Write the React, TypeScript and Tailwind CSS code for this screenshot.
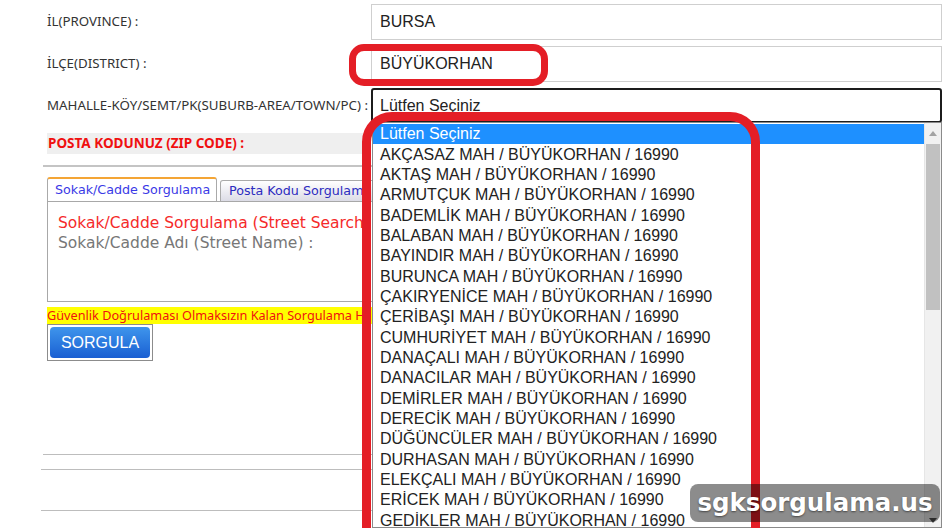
import React from "react";

const mahalleler = [
  "AKÇASAZ MAH / BÜYÜKORHAN / 16990",
  "AKTAŞ MAH / BÜYÜKORHAN / 16990",
  "ARMUTÇUK MAH / BÜYÜKORHAN / 16990",
  "BADEMLİK MAH / BÜYÜKORHAN / 16990",
  "BALABAN MAH / BÜYÜKORHAN / 16990",
  "BAYINDIR MAH / BÜYÜKORHAN / 16990",
  "BURUNCA MAH / BÜYÜKORHAN / 16990",
  "ÇAKIRYENİCE MAH / BÜYÜKORHAN / 16990",
  "ÇERİBAŞI MAH / BÜYÜKORHAN / 16990",
  "CUMHURİYET MAH / BÜYÜKORHAN / 16990",
  "DANAÇALI MAH / BÜYÜKORHAN / 16990",
  "DANACILAR MAH / BÜYÜKORHAN / 16990",
  "DEMİRLER MAH / BÜYÜKORHAN / 16990",
  "DERECİK MAH / BÜYÜKORHAN / 16990",
  "DÜĞÜNCÜLER MAH / BÜYÜKORHAN / 16990",
  "DURHASAN MAH / BÜYÜKORHAN / 16990",
  "ELEKÇALI MAH / BÜYÜKORHAN / 16990",
  "ERİCEK MAH / BÜYÜKORHAN / 16990",
  "GEDİKLER MAH / BÜYÜKORHAN / 16990",
];

const labelCls = "w-[324px] shrink-0 text-[13.3px] text-[#333] font-['Noto_Sans',sans-serif]";
const fieldCls =
  "w-[571px] h-[36px] flex items-center pl-[8px] border border-[#cfcfcf] bg-white text-[16px] text-[#222] font-['Liberation_Sans',Arial,sans-serif]";

export default function App() {
  return (
    <div className="relative w-[945px] h-[528px] overflow-hidden bg-white">
      {/* form */}
      <div className="pl-[47px] pt-[4px]">
        <div className="flex items-center">
          <div className={labelCls}>İL(PROVINCE) :</div>
          <div className={fieldCls}>BURSA</div>
        </div>
        <div className="flex items-center mt-[6px]">
          <div className={labelCls}>İLÇE(DISTRICT) :</div>
          <div className={fieldCls}>BÜYÜKORHAN</div>
        </div>
        <div className="flex items-center mt-[6px]">
          <div className={labelCls}>MAHALLE-KÖY/SEMT/PK(SUBURB-AREA/TOWN/PC) :</div>
          <div className="w-[571px] h-[35px] flex items-center pl-[7px] border-2 border-[#1c1c1c] rounded-[3px] bg-white text-[16px] text-[#222] font-['Liberation_Sans',Arial,sans-serif]">
            Lütfen Seçiniz
          </div>
        </div>

        <div className="mt-[10px] w-[323px] h-[21px] flex items-center pl-[1px] bg-[#efefef] text-[13.5px] font-bold text-[#f01010] font-['Noto_Sans',sans-serif]">
          POSTA KODUNUZ (ZIP CODE) :
        </div>

        <div className="mt-[11px] -ml-[4px] w-[890px] border-t-2 border-[#c4c4c4]" />

        {/* tabs */}
        <div className="mt-[10px] flex items-end h-[24px] font-['DejaVu_Sans',Verdana,sans-serif] text-[12.7px]">
          <div className="w-[170px] h-[24px] flex items-center pl-[7px] bg-white border border-b-0 border-[#aaa] border-t-2 border-t-[#f4a535] rounded-t-[3px] text-[#3a3ae6] whitespace-nowrap overflow-hidden">
            Sokak/Cadde Sorgulama
          </div>
          <div className="ml-[3px] w-[170px] h-[21px] flex items-center pl-[8px] bg-gradient-to-b from-white to-[#dcdce6] border border-b-0 border-[#aaa] rounded-t-[3px] text-[#2d2dc0] whitespace-nowrap overflow-hidden">
            Posta Kodu Sorgulama
          </div>
        </div>
        <div className="w-[860px] h-[101px] border border-[#a8a8a8] pt-[11px] pl-[10px] font-['DejaVu_Sans',Verdana,sans-serif] text-[15.5px] leading-[20px]">
          <div className="text-[#f52a2a]">Sokak/Cadde Sorgulama (Street Search)</div>
          <div className="text-[#777]">Sokak/Cadde Adı (Street Name) :</div>
        </div>

        <div className="mt-[5px] w-[860px] h-[17px] flex items-center bg-[#ffff00] text-[12.7px] text-[#f01010] font-['Noto_Sans',sans-serif] whitespace-nowrap">
          Güvenlik Doğrulaması Olmaksızın Kalan Sorgulama Hakkınız
        </div>

        <div className="w-[106px] h-[37px] border border-[#8c8c8c] p-[2px]">
          <div className="w-full h-full rounded-[4px] bg-gradient-to-b from-[#3f95ec] to-[#1b5fd2] flex items-center justify-center text-white text-[16px] font-['Liberation_Sans',Arial,sans-serif]">
            SORGULA
          </div>
        </div>

        <div className="mt-[93px] -ml-[4px] w-[895px] border-t border-[#bdbdbd]" />
        <div className="mt-[14px] -ml-[6px] w-[897px] border-t border-[#bdbdbd]" />
        <div className="mt-[40px] -ml-[6px] w-[897px] border-t border-[#bdbdbd]" />
      </div>

      {/* open select list */}
      <div className="absolute left-[372px] top-[122px] w-[570px] h-[406px] flex border border-[#8a8a8a] bg-white font-['Liberation_Sans',Arial,sans-serif] text-[16px] text-[#222]">
        <div className="flex-1 overflow-hidden pt-[1px]">
          <div className="h-[20.35px] flex items-center pl-[7px] bg-[#1e90ff] text-white">Lütfen Seçiniz</div>
          {mahalleler.map((m) => (
            <div key={m} className="h-[20.35px] flex items-center pl-[7px] whitespace-nowrap">
              {m}
            </div>
          ))}
        </div>
        <div className="w-[17px] flex flex-col bg-[#f1f1f1] border-l border-[#e6e6e6]">
          <div className="h-[21px] flex items-center justify-center">
            <svg width="8" height="5" viewBox="0 0 8 5">
              <path d="M0 5 L4 0 L8 5 Z" fill="#a3a3a3" />
            </svg>
          </div>
          <div className="mx-[1px] h-[166px] bg-[#c1c1c1]" />
          <div className="flex-1" />
          <div className="h-[14px] flex items-center justify-center">
            <svg width="8" height="5" viewBox="0 0 8 5">
              <path d="M0 0 L8 0 L4 5 Z" fill="#505050" />
            </svg>
          </div>
        </div>
      </div>

      {/* red annotations */}
      <div className="absolute left-[349px] top-[44px] w-[199px] h-[42px] border-[7px] border-[#e41e26] rounded-[15px]" />
      <div className="absolute left-[362px] top-[112px] w-[398px] h-[480px] border-[9px] border-[#e41e26] rounded-[30px]" />

      {/* watermark */}
      <div className="absolute left-[690px] top-[484px] w-[250px] h-[38px] rounded-[8px] bg-black/45 flex items-center justify-center text-white text-[24.5px] font-bold font-['DejaVu_Sans',Verdana,sans-serif] [text-shadow:0_1px_2px_rgba(0,0,0,0.5)]">
        sgksorgulama.us
      </div>
    </div>
  );
}
